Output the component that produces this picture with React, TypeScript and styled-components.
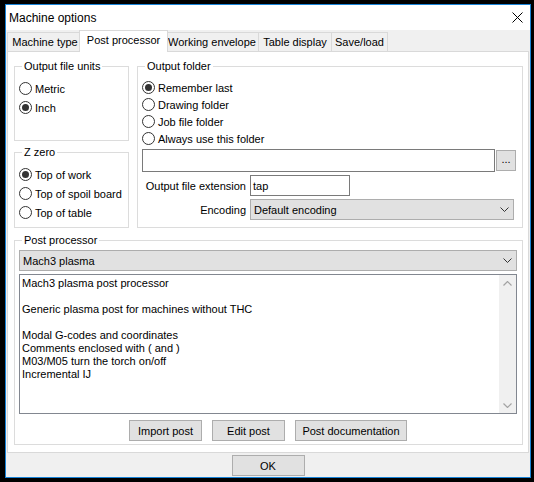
import React from 'react';
import styled, { createGlobalStyle } from 'styled-components';

const GlobalStyle = createGlobalStyle`
  html, body { margin: 0; padding: 0; background: #000; }
  body { font-family: "Liberation Sans", Arial, sans-serif; font-size: 11px; color: #000; }
  * { box-sizing: border-box; }
`;

const Screen = styled.div`
  width: 534px;
  height: 482px;
  padding: 4px 4px 0 5px;
`;

const Window = styled.div`
  width: 526px;
  height: 474px;
  border: 1px solid #1883d7;
  background: #f0f0f0;
  display: flex;
  flex-direction: column;
`;

const TitleBar = styled.div`
  height: 25px;
  flex: none;
  background: #fff;
  display: flex;
  align-items: center;
  justify-content: space-between;
  padding: 0 7px 0 3px;
  font-size: 12px;
`;

const Body = styled.div`
  padding: 0 1px;
  display: flex;
  flex-direction: column;
`;

const TabRow = styled.div`
  height: 21px;
  display: flex;
  align-items: flex-end;
  position: relative;
  z-index: 1;
`;

const Tab = styled.div<{ $w: number; $active?: boolean }>`
  width: ${p => p.$w + (p.$active ? 4 : 0)}px;
  height: ${p => (p.$active ? 22 : 19)}px;
  margin: ${p => (p.$active ? '0 -3px -1px -3px' : '0 -1px 0 0')};
  border: 1px solid #d9d9d9;
  border-bottom: none;
  background: ${p => (p.$active ? '#fff' : '#f0f0f0')};
  position: relative;
  z-index: ${p => (p.$active ? 2 : 0)};
  display: flex;
  align-items: ${p => (p.$active ? 'flex-start' : 'center')};
  padding-top: ${p => (p.$active ? '3px' : '0')};
  justify-content: center;
  white-space: nowrap;
`;

const Panel = styled.div`
  height: 402px;
  background: #fff;
  border: 1px solid #d9d9d9;
  padding: 14px 5px 0 6px;
  display: flex;
  flex-direction: column;
  gap: 12px;
`;

const TopRow = styled.div`
  display: flex;
  gap: 8px;
`;

const LeftCol = styled.div`
  width: 115px;
  display: flex;
  flex-direction: column;
  gap: 11px;
`;

const Group = styled.div<{ $h: number; $w?: number }>`
  position: relative;
  height: ${p => p.$h}px;
  width: ${p => (p.$w ? `${p.$w}px` : 'auto')};
  border: 1px solid #dcdcdc;
  padding: 12px 4px 0 4px;
`;

const Legend = styled.span`
  position: absolute;
  top: -7px;
  left: 7px;
  padding: 0 2px;
  line-height: 13px;
  background: #fff;
  white-space: nowrap;
`;

const RadioRow = styled.label<{ $h: number }>`
  height: ${p => p.$h}px;
  display: flex;
  align-items: center;
  gap: 3px;
  white-space: nowrap;
`;

const RadioCircle = styled.span<{ $on?: boolean }>`
  width: 13px;
  height: 13px;
  flex: none;
  border: 1px solid #333;
  border-radius: 50%;
  background: #fff;
  display: flex;
  align-items: center;
  justify-content: center;
  &::after {
    content: '';
    width: 7px;
    height: 7px;
    border-radius: 50%;
    background: ${p => (p.$on ? '#333' : 'transparent')};
  }
`;

const FolderRow = styled.div`
  margin-top: 2px;
  display: flex;
  align-items: center;
  gap: 1px;
`;

const TextBox = styled.div<{ $w: number; $h: number }>`
  width: ${p => p.$w}px;
  height: ${p => p.$h}px;
  border: 1px solid #7a7a7a;
  background: #fff;
  padding: 0 2px;
  display: flex;
  align-items: center;
`;

const SmallButton = styled.div`
  width: 20px;
  height: 21px;
  background: #e1e1e1;
  border: 1px solid #adadad;
  display: flex;
  align-items: center;
  justify-content: center;
  padding-bottom: 3px;
`;

const FieldRow = styled.div`
  margin-top: 3px;
  display: grid;
  grid-template-columns: 104px auto;
  column-gap: 4px;
  align-items: center;
`;

const FieldLabel = styled.span`
  text-align: right;
  white-space: nowrap;
`;

const Combo = styled.div<{ $w?: number }>`
  width: ${p => (p.$w ? `${p.$w}px` : 'auto')};
  height: 21px;
  background: #e1e1e1;
  border: 1px solid #adadad;
  display: flex;
  align-items: center;
  justify-content: space-between;
  padding: 0 4px 0 3px;
`;

const PostGroup = styled(Group)`
  padding: 9px 5px 0 4px;
  display: flex;
  flex-direction: column;
`;

const TextArea = styled.div`
  margin-top: 3px;
  height: 140px;
  border: 1px solid #828790;
  background: #fff;
  display: flex;
`;

const TextLines = styled.div`
  flex: 1;
  padding: 2px 2px;
  line-height: 13px;
  white-space: pre;
`;

const ScrollBar = styled.div`
  width: 17px;
  background: #f0f0f0;
  display: flex;
  flex-direction: column;
  justify-content: space-between;
  align-items: center;
  padding: 6px 0 5px;
`;

const ButtonRow = styled.div`
  margin-top: 6px;
  display: flex;
  justify-content: center;
  gap: 10px;
`;

const Button = styled.div<{ $w: number }>`
  width: ${p => p.$w}px;
  height: 21px;
  background: #e1e1e1;
  border: 1px solid #adadad;
  display: flex;
  align-items: center;
  justify-content: center;
  white-space: nowrap;
`;

const Footer = styled.div`
  margin-top: 2px;
  display: flex;
  justify-content: center;
`;

const Chevron = ({ color = '#333' }: { color?: string }) => (
  <svg width="9" height="5" viewBox="0 0 9 5">
    <path d="M0.5 0.5 L4.5 4.5 L8.5 0.5" fill="none" stroke={color} strokeWidth="1" />
  </svg>
);

const ChevronUp = ({ color = '#a3a3a3' }: { color?: string }) => (
  <svg width="9" height="5" viewBox="0 0 9 5">
    <path d="M0.5 4.5 L4.5 0.5 L8.5 4.5" fill="none" stroke={color} strokeWidth="1.2" />
  </svg>
);

const CloseIcon = () => (
  <svg width="11" height="11" viewBox="0 0 11 11">
    <path d="M0.5 0.5 L10.5 10.5 M10.5 0.5 L0.5 10.5" stroke="#000" strokeWidth="1" />
  </svg>
);

const Radio = ({ label, on, h }: { label: string; on?: boolean; h: number }) => (
  <RadioRow $h={h}>
    <RadioCircle $on={on} />
    {label}
  </RadioRow>
);

const description = `Mach3 plasma post processor

Generic plasma post for machines without THC

Modal G-codes and coordinates
Comments enclosed with ( and )
M03/M05 turn the torch on/off
Incremental IJ`;

export default function App() {
  return (
    <>
      <GlobalStyle />
      <Screen>
        <Window>
          <TitleBar>
            <span>Machine options</span>
            <CloseIcon />
          </TitleBar>
          <Body>
            <TabRow>
              <Tab $w={76}>Machine type</Tab>
              <Tab $w={85} $active>Post processor</Tab>
              <Tab $w={94}>Working envelope</Tab>
              <Tab $w={74}>Table display</Tab>
              <Tab $w={57}>Save/load</Tab>
            </TabRow>
            <Panel>
              <TopRow>
                <LeftCol>
                  <Group $h={75}>
                    <Legend>Output file units</Legend>
                    <Radio label="Metric" h={19} />
                    <Radio label="Inch" h={19} on />
                  </Group>
                  <Group $h={76}>
                    <Legend>Z zero</Legend>
                    <Radio label="Top of work" h={19} on />
                    <Radio label="Top of spoil board" h={19} />
                    <Radio label="Top of table" h={19} />
                  </Group>
                </LeftCol>
                <Group $h={162} $w={386}>
                  <Legend>Output folder</Legend>
                  <Radio label="Remember last" h={17} on />
                  <Radio label="Drawing folder" h={17} />
                  <Radio label="Job file folder" h={17} />
                  <Radio label="Always use this folder" h={17} />
                  <FolderRow>
                    <TextBox $w={353} $h={23} />
                    <SmallButton>...</SmallButton>
                  </FolderRow>
                  <FieldRow>
                    <FieldLabel>Output file extension</FieldLabel>
                    <TextBox $w={100} $h={21}>tap</TextBox>
                  </FieldRow>
                  <FieldRow>
                    <FieldLabel>Encoding</FieldLabel>
                    <Combo $w={264}>
                      <span>Default encoding</span>
                      <Chevron />
                    </Combo>
                  </FieldRow>
                </Group>
              </TopRow>
              <PostGroup $h={205}>
                <Legend>Post processor</Legend>
                <Combo>
                  <span>Mach3 plasma</span>
                  <Chevron />
                </Combo>
                <TextArea>
                  <TextLines>{description}</TextLines>
                  <ScrollBar>
                    <ChevronUp />
                    <svg width="9" height="5" viewBox="0 0 9 5">
                      <path d="M0.5 0.5 L4.5 4.5 L8.5 0.5" fill="none" stroke="#a3a3a3" strokeWidth="1.2" />
                    </svg>
                  </ScrollBar>
                </TextArea>
                <ButtonRow>
                  <Button $w={73}>Import post</Button>
                  <Button $w={73}>Edit post</Button>
                  <Button $w={112}>Post documentation</Button>
                </ButtonRow>
              </PostGroup>
            </Panel>
            <Footer>
              <Button $w={73}>OK</Button>
            </Footer>
          </Body>
        </Window>
      </Screen>
    </>
  );
}
